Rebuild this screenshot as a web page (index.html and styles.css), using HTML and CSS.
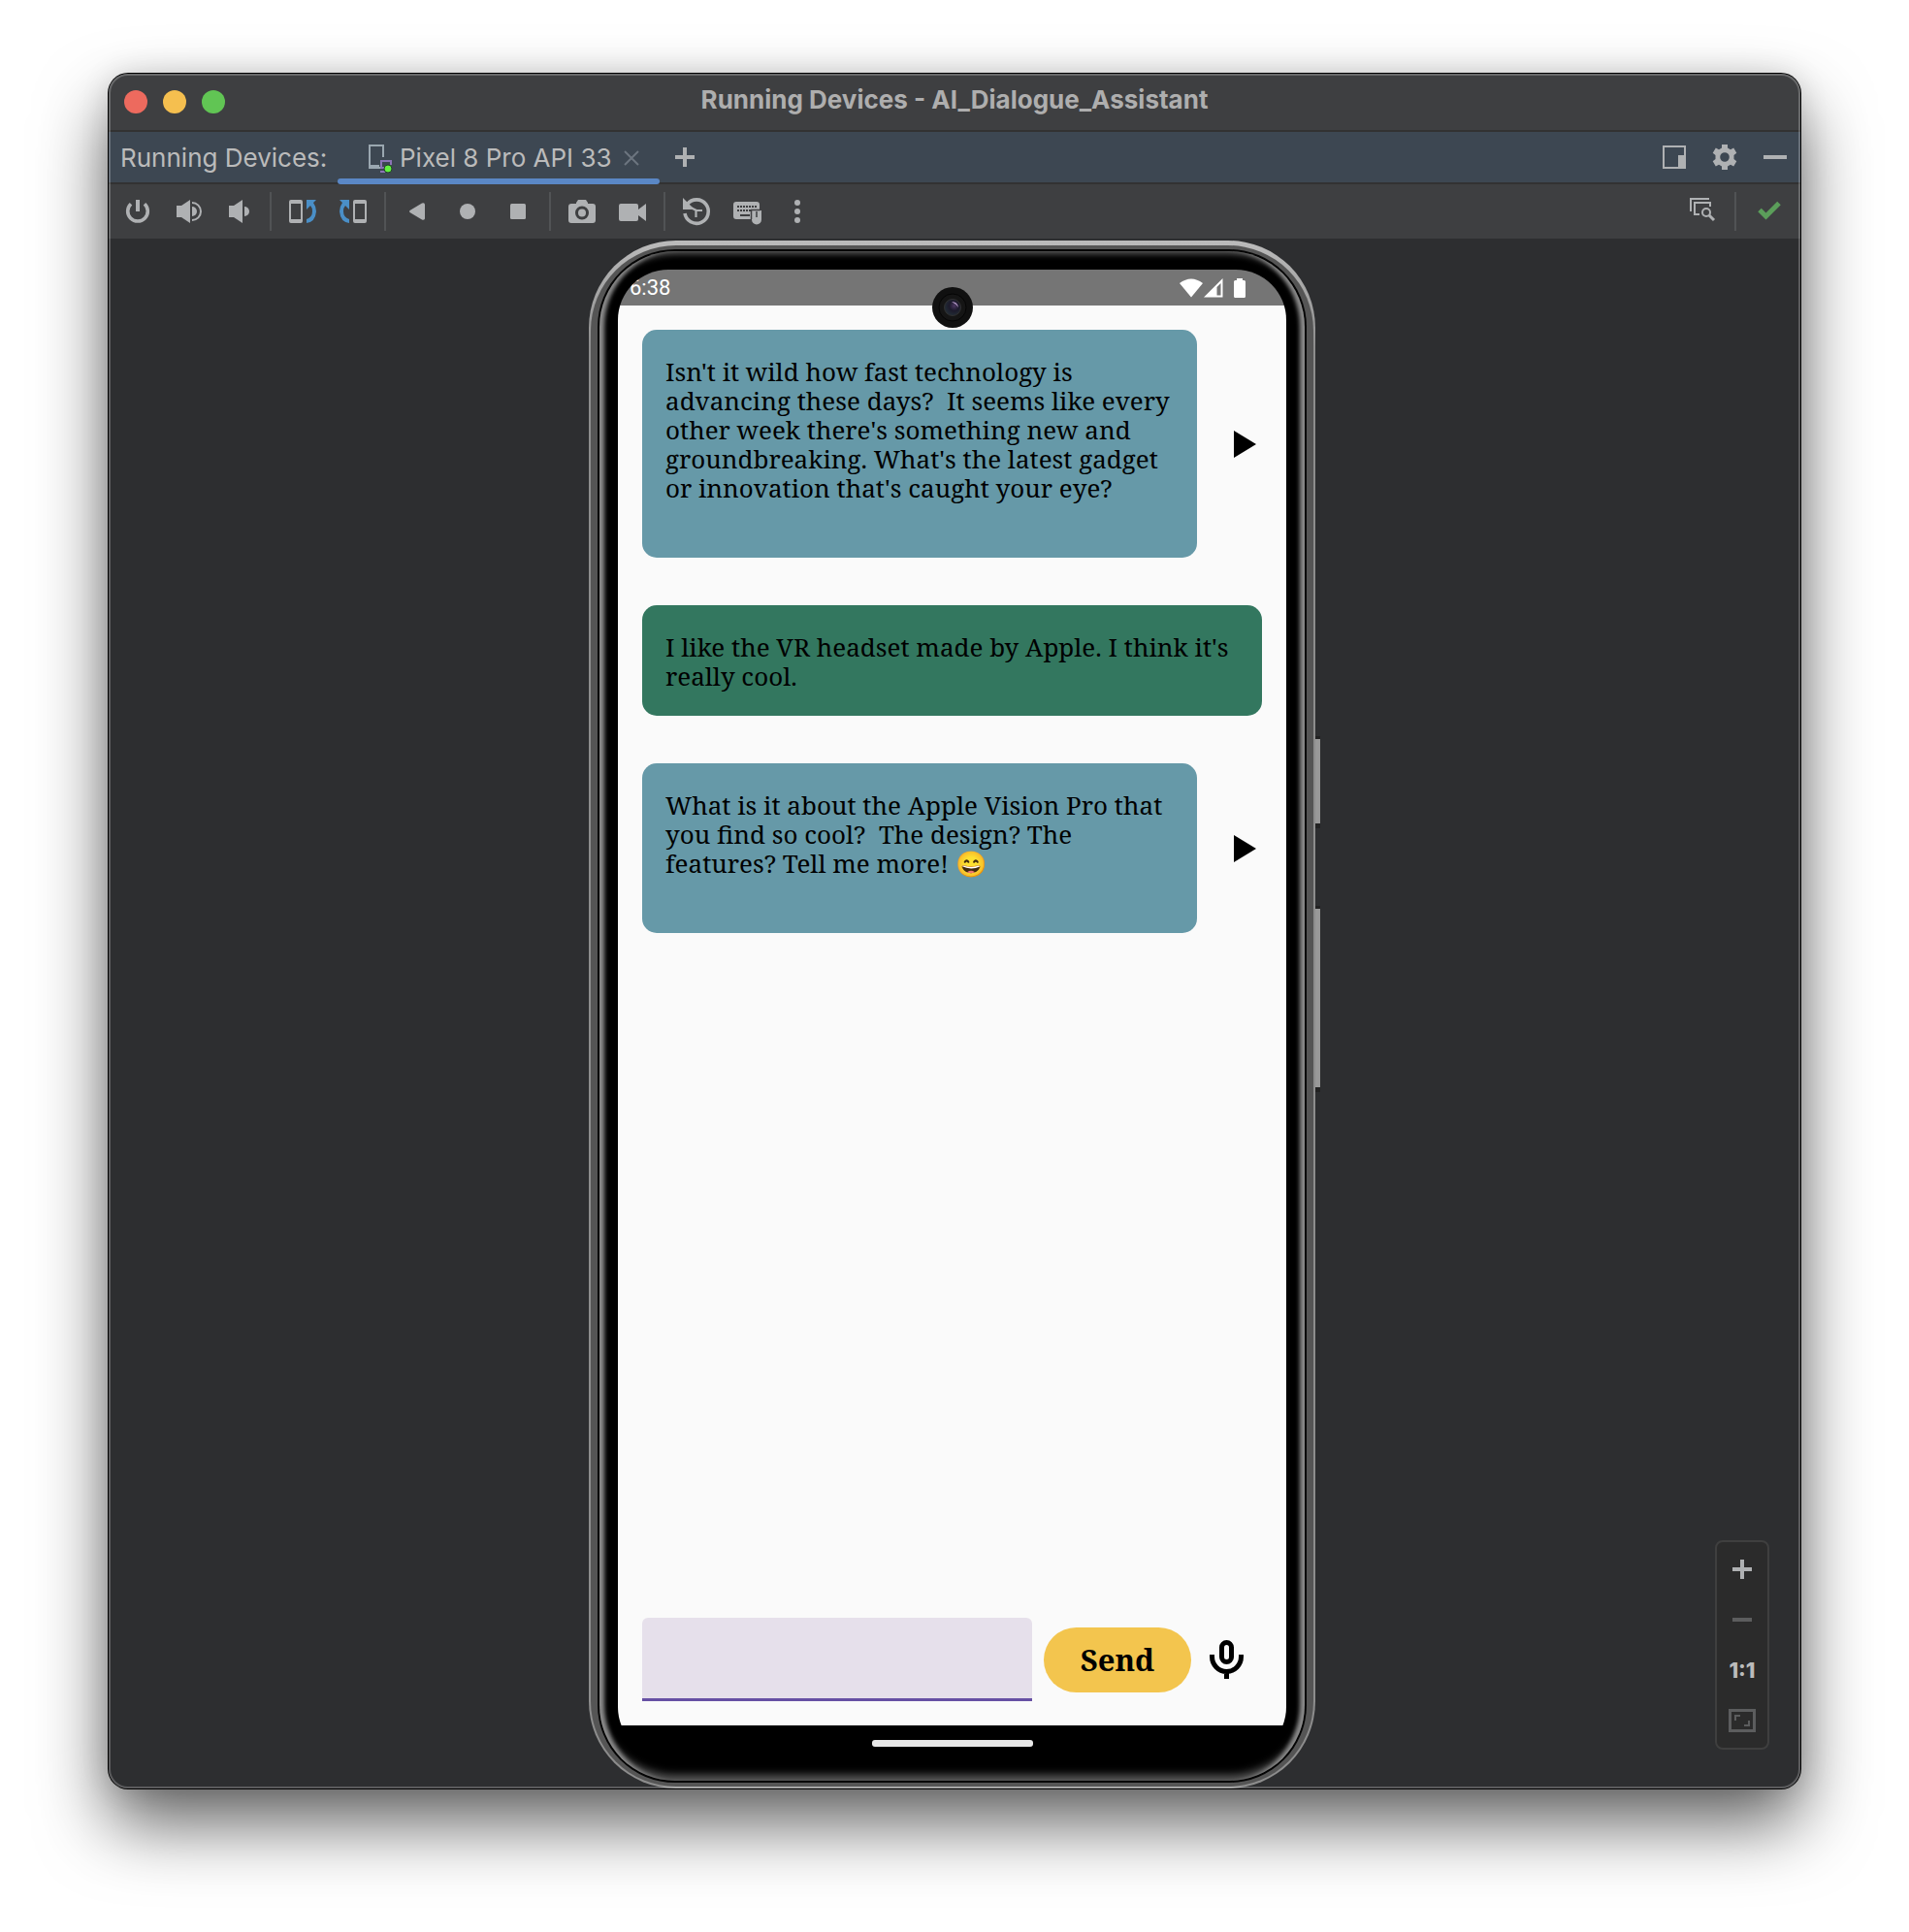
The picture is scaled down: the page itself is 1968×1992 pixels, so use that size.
FILE: index.html
```html
<!DOCTYPE html>
<html lang="en">
<head>
<meta charset="utf-8">
<title>Running Devices - AI_Dialogue_Assistant</title>
<link rel="stylesheet" href="styles.css">
</head>
<body>
<main class="window">
  <header class="titlebar">
    <div class="lights">
      <button class="light red" aria-label="Close window"></button>
      <button class="light yellow" aria-label="Minimize window"></button>
      <button class="light green" aria-label="Zoom window"></button>
    </div>
    <h1 class="title">Running Devices - AI_Dialogue_Assistant</h1>
  </header>

  <nav class="tabs">
    <span class="tabs-label">Running Devices:</span>
    <div class="tab">
      <svg class="icon" viewBox="0 0 32 32" aria-hidden="true">
        <path d="M16 26H5V3H19V15" fill="none" stroke="#9aa7b0" stroke-width="2"/>
        <path d="M4 23H15V27H4z" fill="#9aa7b0"/>
        <path d="M27 19H17V26H21M16 30H21M27 18V23" fill="none" stroke="#8b73b5" stroke-width="2"/>
        <circle cx="24" cy="27" r="4" fill="#62f13f" stroke="#25402b"/>
      </svg>
      <span>Pixel 8 Pro API 33</span>
      <button class="tab-close" aria-label="Close tab">
        <svg width="16" height="16" viewBox="0 0 16 16"><path d="M1 1L15 15M15 1L1 15" stroke="#6c757f" stroke-width="2"/></svg>
      </button>
    </div>
    <button class="tool add" aria-label="Add device">
      <svg class="icon" viewBox="0 0 32 32"><path d="M16 6V26M6 16H26" stroke="#afb1b3" stroke-width="4"/></svg>
    </button>
    <div class="right">
      <button class="tool" aria-label="Layout">
        <svg class="icon" viewBox="0 0 32 32"><path d="M5 5H27V27H5z" fill="none" stroke="#afb1b3" stroke-width="2"/><path d="M20 14H28V28H20z" fill="#afb1b3"/></svg>
      </button>
      <button class="tool" aria-label="Settings">
        <svg class="icon" viewBox="0 0 32 32"><path fill="#afb1b3" fill-rule="evenodd" d="M13 3H19V6.500L22 8.300L25.200 6.600L28.300 11.800L25.500 14V18L28.300 20.200L25.200 25.400L22 23.700L19 25.500V29H13V25.500L10 23.700L6.800 25.400L3.700 20.200L6.500 18V14L3.700 11.800L6.800 6.600L10 8.300L13 6.500zM16 11.200A4.800 4.800 0 1 0 16 20.800A4.800 4.800 0 1 0 16 11.200z"/></svg>
      </button>
      <button class="tool" aria-label="Hide">
        <svg class="icon" viewBox="0 0 32 32"><path d="M4 16H28" stroke="#afb1b3" stroke-width="4"/></svg>
      </button>
    </div>
  </nav>

  <div class="toolbar">
    <button class="tool" aria-label="Power">
      <svg class="icon" viewBox="0 0 32 32"><path d="M9 8.200A10.300 10.300 0 1 0 23 8.200" fill="none" stroke="#afb1b3" stroke-width="3.600"/><path d="M16 4V16" stroke="#afb1b3" stroke-width="4"/></svg>
    </button>
    <button class="tool" aria-label="Volume up">
      <svg class="icon" viewBox="0 0 32 32"><path d="M4 10H9L18 4V28L9 22H4z" fill="#afb1b3"/><path d="M20 11A5 5 0 0 1 20 21z" fill="#afb1b3"/><path d="M20 7A9 9 0 0 1 20 25" fill="none" stroke="#afb1b3" stroke-width="2"/></svg>
    </button>
    <button class="tool" aria-label="Volume down">
      <svg class="icon" viewBox="0 0 32 32"><path d="M6 10H11L20 4V28L11 22H6z" fill="#afb1b3"/><path d="M22 11A5 5 0 0 1 22 21z" fill="#afb1b3"/></svg>
    </button>
    <span class="sep"></span>
    <button class="tool" aria-label="Rotate left">
      <svg class="icon" viewBox="0 0 32 32"><path fill="#afb1b3" fill-rule="evenodd" d="M4 4H14Q16 4 16 6V26Q16 28 14 28H4Q2 28 2 26V6Q2 4 4 4zM4 8V24H14V8z"/><path d="M20 4H30L27 7Q30 11 30 16Q29 27 20 28V24Q26 22 26 16Q26 12 24 10L20 14z" fill="#4a8fc7"/></svg>
    </button>
    <button class="tool" aria-label="Rotate right">
      <svg class="icon" viewBox="0 0 32 32"><path fill="#afb1b3" fill-rule="evenodd" d="M18 4H28Q30 4 30 6V26Q30 28 28 28H18Q16 28 16 26V6Q16 4 18 4zM18 8V24H28V8z"/><path d="M12 4H2L5 7Q2 11 2 16Q3 27 12 28V24Q6 22 6 16Q6 12 8 10L12 14z" fill="#4a8fc7"/></svg>
    </button>
    <span class="sep"></span>
    <button class="tool" aria-label="Back">
      <svg class="icon" viewBox="0 0 32 32"><path d="M24 8.500V23.500Q23 25.500 21 24.500L8.500 17Q7.500 16 8.500 15L21 7.500Q23 6.500 24 8.500z" fill="#afb1b3"/></svg>
    </button>
    <button class="tool" aria-label="Home">
      <svg class="icon" viewBox="0 0 32 32"><circle cx="16" cy="16" r="8" fill="#afb1b3"/></svg>
    </button>
    <button class="tool" aria-label="Overview">
      <svg class="icon" viewBox="0 0 32 32"><rect x="8" y="8" width="16" height="16" rx="1.500" fill="#afb1b3"/></svg>
    </button>
    <span class="sep"></span>
    <button class="tool" aria-label="Screenshot">
      <svg class="icon" viewBox="0 0 32 32"><path fill="#afb1b3" d="M10 7L12 4H20L22 7V8H27Q30 8 30 11V25Q30 28 27 28H5Q2 28 2 25V11Q2 8 5 8H10z"/><circle cx="16" cy="17.500" r="5.500" fill="#afb1b3" stroke="#3e3f41" stroke-width="3"/></svg>
    </button>
    <button class="tool" aria-label="Record screen">
      <svg class="icon" viewBox="0 0 32 32"><path fill="#afb1b3" d="M4 8H20Q22 8 22 10V14L30 8V26L22 20V24Q22 26 20 26H4Q2 26 2 24V10Q2 8 4 8z"/></svg>
    </button>
    <span class="sep"></span>
    <button class="tool" aria-label="Snapshots">
      <svg class="icon" viewBox="0 0 32 32"><path d="M6.500 8.500A12.200 12.200 0 1 1 4 18" fill="none" stroke="#afb1b3" stroke-width="3.600"/><path d="M2 2V14H14z" fill="#afb1b3"/><path d="M22 15H15.500V22M16 15L10 12" fill="none" stroke="#afb1b3" stroke-width="2.200"/></svg>
    </button>
    <button class="tool" aria-label="Hardware input">
      <svg class="icon" viewBox="0 0 32 32"><path d="M5 6H26Q29 6 29 9V15H20V24H5Q2 24 2 21V9Q2 6 5 6z" fill="#afb1b3"/><path d="M6 11H26M6 15H20" stroke="#3e3f41" stroke-width="2" stroke-dasharray="2 1"/><path d="M9 20H19" stroke="#3e3f41" stroke-width="2"/><path d="M21 15H31V24.500A5 5 0 0 1 21 24.500z" fill="#afb1b3"/><path d="M26 16V22M20 14.500H30M20.500 15V24" stroke="#3e3f41" stroke-width="1.500"/></svg>
    </button>
    <button class="tool" aria-label="More">
      <svg class="icon" viewBox="0 0 32 32"><g fill="#afb1b3"><circle cx="16" cy="7" r="3"/><circle cx="16" cy="16" r="3"/><circle cx="16" cy="25" r="3"/></g></svg>
    </button>
    <div class="right checks">
      <button class="tool" aria-label="Inspect layout">
        <svg class="icon" viewBox="0 0 32 32"><g fill="none" stroke="#afb1b3" stroke-width="2"><path d="M5 16V3H24"/><path d="M14 19H9V7H25V11"/><circle cx="21" cy="17" r="4"/><path d="M24 20L29 25" stroke-width="3"/></g></svg>
      </button>
      <span class="sep"></span>
      <button class="tool" aria-label="No problems">
        <svg class="icon" viewBox="0 0 32 32"><path d="M6 14.500L12.500 21L26 7.500" fill="none" stroke="#5b9e5a" stroke-width="5"/></svg>
      </button>
    </div>
  </div>

  <section class="stage">
    <div class="phone">
      <span class="side-key power"></span>
      <span class="side-key volume"></span>
      <div class="band"><div class="seam"><div class="lip">
        <div class="screen">
          <div class="status">
            <time>6:38</time>
            <span class="status-icons">
              <svg width="24" height="20" viewBox="0 0 24 20"><path d="M0 5Q12 -4 24 5L12 19.500z" fill="#fff"/></svg>
              <svg width="20" height="20" viewBox="0 0 20 20"><path fill="#fff" fill-rule="evenodd" d="M19.500 0V19.500H0zM17.500 5L13.500 9V17.500H17.500z"/></svg>
              <svg class="battery" width="12" height="20" viewBox="0 0 12 20"><path fill="#fff" d="M3 0H9V2H10.500Q12 2 12 3.500V18.500Q12 20 10.500 20H1.500Q0 20 0 18.500V3.500Q0 2 1.500 2H3z"/></svg>
            </span>
            <svg class="camera" viewBox="0 0 42 42" aria-hidden="true">
              <defs><radialGradient id="lens" cx=".6" cy=".4" r=".6"><stop offset="0" stop-color="#4a3560"/><stop offset=".5" stop-color="#1c1a2b"/><stop offset="1" stop-color="#222c35"/></radialGradient></defs>
              <circle cx="21" cy="21" r="21" fill="#101010"/><circle cx="21" cy="21" r="14" fill="#151515" stroke="#050505"/>
              <circle cx="21" cy="21" r="8.500" fill="url(#lens)" stroke="#303030"/><path d="M20 15Q26 15 27 21Q24 17 20 15z" fill="#b79ac9"/>
            </svg>
          </div>
          <div class="app">
            <div class="row">
              <p class="bubble ai">Isn't it wild how fast technology is<br>advancing these days?&nbsp; It seems like every<br>other week there's something new and<br>groundbreaking. What's the latest gadget<br>or innovation that's caught your eye?</p>
              <button class="play" aria-label="Play message"><svg width="24" height="28" viewBox="0 0 24 28"><path d="M0 0L23 14L0 28z"/></svg></button>
            </div>
            <div class="row">
              <p class="bubble user">I like the VR headset made by Apple. I think it's<br>really cool.</p>
            </div>
            <div class="row">
              <p class="bubble ai">What is it about the Apple Vision Pro that<br>you find so cool?&nbsp; The design? The<br>features? Tell me more! 😄</p>
              <button class="play" aria-label="Play message"><svg width="24" height="28" viewBox="0 0 24 28"><path d="M0 0L23 14L0 28z"/></svg></button>
            </div>
            <form class="composer">
              <input class="field" type="text" aria-label="Message">
              <button class="send" type="button">Send</button>
              <button class="mic" type="button" aria-label="Record voice">
                <svg width="36" height="40" viewBox="0 0 36 40"><g fill="none" stroke="#000" stroke-width="5"><rect x="12.500" y="2.500" width="10" height="20" rx="5"/><path d="M2.500 15V17A15 15.500 0 0 0 32.500 17V15M17.500 32V40"/></g></svg>
              </button>
            </form>
          </div>
          <div class="navbar"><span class="pill"></span></div>
        </div>
      </div></div></div>
    </div>

    <div class="zoom">
      <button aria-label="Zoom in"><svg class="icon" viewBox="0 0 32 32"><path d="M16 6V26M6 16H26" stroke="#afb1b3" stroke-width="4"/></svg></button>
      <button aria-label="Zoom out"><svg class="icon" viewBox="0 0 32 32"><path d="M6 16H26" stroke="#5c5d5e" stroke-width="4"/></svg></button>
      <button>1:1</button>
      <button aria-label="Fit to screen"><svg class="icon" viewBox="0 0 32 32"><g fill="none" stroke="#5c5d5e"><path d="M3.500 5.500H28.500V26.500H3.500z" stroke-width="3"/><path d="M9 16V11H14M23 16V21H18" stroke-width="2"/></g></svg></button>
    </div>
  </section>
</main>
</body>
</html>
```

FILE: styles.css
```css
* { box-sizing: border-box; }

body {
  margin: 0;
  padding: 76px 112px 148px;
  background: #fff;
  font-family: Inter, "Liberation Sans", sans-serif;
  color: #bbb;
}

button {
  border: 0;
  padding: 0;
  background: none;
  color: inherit;
  font: inherit;
}

svg { display: block; }

.icon { width: 32px; height: 32px; flex: none; }

.window {
  position: relative;
  display: flex;
  flex-direction: column;
  min-height: calc(100vh - 224px);
  border-radius: 20px;
  background: #2d2e30;
  box-shadow: 0 0 0 1px #000, 0 36px 72px rgba(0, 0, 0, .62), 0 0 30px rgba(0, 0, 0, .12);
}

.window::after {
  content: "";
  position: absolute;
  inset: 0;
  border: 2px solid rgba(255, 255, 255, .22);
  border-radius: 20px;
  pointer-events: none;
}

.titlebar {
  display: grid;
  grid-template-columns: 1fr auto 1fr;
  align-items: center;
  height: 60px;
  padding: 0 16px;
  border-radius: 20px 20px 0 0;
  background: #3e3f41;
  border-bottom: 2px solid #323232;
}

.lights { display: flex; gap: 16px; }

.light { width: 24px; height: 24px; border-radius: 50%; }
.red { background: #ed6a5e; }
.yellow { background: #f5bf4f; }
.green { background: #61c554; }

.title {
  margin: 0;
  padding-bottom: 4px;
  font-size: 26px;
  line-height: 32px;
  font-weight: 700;
  color: #aeaeae;
}

.tabs {
  display: flex;
  align-items: center;
  height: 54px;
  padding-left: 12px;
  background: #3d4752;
  border-bottom: 2px solid #323232;
  font-size: 26px;
  line-height: 32px;
}

.tabs-label { width: 224px; padding-top: 2px; white-space: nowrap; }

.tab {
  position: relative;
  display: flex;
  align-items: center;
  width: 332px;
  height: 54px;
  padding: 2px 0 0 28px;
  white-space: nowrap;
}

.tab span { margin-left: 4px; }

.tab-close { margin-left: 12px; }

.tab::after {
  content: "";
  position: absolute;
  inset: auto 0 -1px;
  height: 6px;
  border-radius: 3px;
  background: #5a87c5;
}

.right { display: flex; align-items: center; margin-left: auto; }

.tool {
  display: grid;
  place-items: center;
  width: 52px;
  height: 52px;
  flex: none;
}

.toolbar {
  display: flex;
  align-items: center;
  height: 56px;
  padding: 0 6px 0 4px;
  background: #3e3f41;
}

.sep {
  width: 2px;
  height: 40px;
  margin: 0 6px;
  background: #515355;
}

.checks { gap: 2px; }

.stage {
  position: relative;
  display: flex;
  flex: 1;
  justify-content: center;
  padding: 2px 5px 0 0;
  border-radius: 0 0 20px 20px;
  background: #2d2e30;
}

.phone {
  position: relative;
  display: flex;
  width: 749px;
  max-width: 90%;
  padding: 5px 2px 2px;
  border-radius: 90px;
  background: linear-gradient(#bbb, #8d8d8d 110px);
}

.band {
  display: flex;
  flex: 1;
  min-width: 0;
  padding: 4px 7px;
  border-radius: 88px;
  background: #555;
}

.seam {
  display: flex;
  flex: 1;
  min-width: 0;
  padding: 2px;
  border-radius: 80px;
  background: #050505;
}

.lip {
  display: flex;
  flex: 1;
  min-width: 0;
  padding: 19px 19px 24px;
  border-radius: 78px;
  background: #000;
  box-shadow: inset 8px 0 4px -3px #8c8c8c, inset -8px 0 4px -3px #8c8c8c, inset 0 -10px 8px -4px #585858, inset 0 7px 6px -4px #555;
}

.side-key {
  position: absolute;
  left: 100%;
  width: 5px;
  border: solid #222;
  border-width: 3px 0 5px;
  background: #999;
}

.power { top: 32%; height: 6%; }
.volume { top: 43%; height: 12%; }

.screen {
  display: flex;
  flex: 1;
  flex-direction: column;
  min-width: 0;
  border-radius: 52px;
  background: #000;
  overflow: hidden;
}

.status {
  position: relative;
  z-index: 1;
  display: flex;
  align-items: center;
  justify-content: space-between;
  height: 37px;
  padding: 0 42px 0 12px;
  background: #757575;
  color: #fff;
  font: 22px/36px Roboto, sans-serif;
}

.status-icons { display: flex; gap: 1px; }
.battery { margin-left: 10px; }

.camera {
  position: absolute;
  top: 18px;
  left: calc(50% - 21px);
  width: 42px;
  height: 42px;
}

.app {
  display: flex;
  flex: 1;
  flex-direction: column;
  gap: 49px;
  padding: 25px;
  background: #fafafa;
  color: #000;
  font-family: "Noto Serif", "Droid Serif", "Liberation Serif", serif;
}

.row { display: flex; align-items: center; gap: 25px; }

.bubble {
  flex: 1;
  margin: 0;
  border-radius: 15px;
  font-size: 26px;
  line-height: 30px;
  white-space: nowrap;
}

.ai { padding: 28px 24px 57px; background: #6699a8; }
.user { padding: 28px 24px 26px; background: #33775f; }

.play { width: 42px; padding-left: 13px; }

.composer {
  display: flex;
  align-items: center;
  gap: 12px;
  margin-top: auto;
}

.field {
  flex: 1;
  min-width: 0;
  height: 86px;
  padding: 0 24px;
  border: 0;
  border-bottom: 3px solid #6650a4;
  border-radius: 6px 6px 0 0;
  background: #e6e0eb;
  font: inherit;
  font-size: 26px;
}

.send {
  width: 152px;
  height: 67px;
  border-radius: 34px;
  background: #f3c54e;
  font-size: 31px;
  font-weight: 700;
}

.mic { width: 61px; padding-left: 7px; }

.navbar {
  display: grid;
  place-items: center;
  height: 33px;
  padding-top: 4px;
  background: #000;
}

.pill {
  width: 166px;
  height: 7px;
  border-radius: 3px;
  background: #e8e8e8;
}

.zoom {
  position: absolute;
  right: 32px;
  bottom: 40px;
  display: grid;
  grid-auto-rows: 52px;
  width: 56px;
  padding: 2px 0;
  border: 2px solid #3f3f3f;
  border-radius: 8px;
  background: #2b2b2b;
}

.zoom button {
  display: grid;
  place-items: center;
  font-size: 22px;
  font-weight: 800;
}
```
